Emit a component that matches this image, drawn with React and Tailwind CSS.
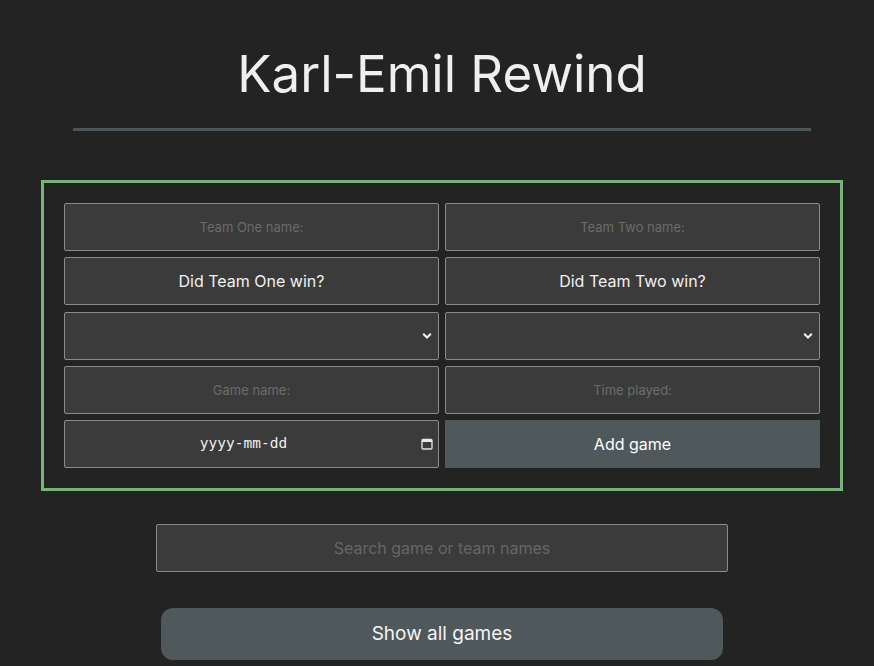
import React from "react";

function Chevron() {
  return (
    <svg width="10" height="7" viewBox="0 0 10 7" className="absolute right-[6px] top-1/2 -translate-y-1/2">
      <path d="M1.2 1.2 L5 5 L8.8 1.2" fill="none" stroke="#f2f2f2" strokeWidth="2" />
    </svg>
  );
}

function Calendar() {
  return (
    <svg width="12" height="12" viewBox="0 0 12 12" className="absolute right-[5px] top-1/2 -translate-y-1/2">
      <rect x="1" y="1.5" width="10" height="9.5" rx="1" fill="none" stroke="#e8e8e8" strokeWidth="1.3" />
      <rect x="1" y="1.5" width="10" height="2.5" fill="#e8e8e8" />
    </svg>
  );
}

const field =
  "h-[48px] w-full bg-[#3b3b3b] border border-[#8a8a8a] rounded-[2px] flex items-center justify-center relative";

export default function App() {
  return (
    <div
      className="min-h-[666px] bg-[#232323] pl-[10px] flex flex-col items-center"
      style={{ fontFamily: "Inter, 'Noto Sans', sans-serif" }}
    >
      <h1 className="mt-[38px] text-[51px] leading-[72px] text-[#efefef] font-normal">Karl-Emil Rewind</h1>
      <div className="mt-[18px] w-[738px] h-[3px] bg-[#4d5558]" />
      <div className="mt-[49px] w-[802px] border-[3px] border-[#78b47a] p-[20px] grid grid-cols-2 gap-x-[6px] gap-y-[6px]">
        <div className={field}>
          <span className="text-[13px] text-[#6b6b6b] pt-[2px]">Team One name:</span>
        </div>
        <div className={field}>
          <span className="text-[13px] text-[#6b6b6b] pt-[2px]">Team Two name:</span>
        </div>
        <div className={field}>
          <span className="text-[16px] text-[#f0f0f0]">Did Team One win?</span>
        </div>
        <div className={field}>
          <span className="text-[16px] text-[#f0f0f0]">Did Team Two win?</span>
        </div>
        <div className={field + " mt-[1px]"}>
          <Chevron />
        </div>
        <div className={field + " mt-[1px]"}>
          <Chevron />
        </div>
        <div className={field}>
          <span className="text-[13px] text-[#6b6b6b] pt-[2px]">Game name:</span>
        </div>
        <div className={field}>
          <span className="text-[13px] text-[#6b6b6b] pt-[2px]">Time played:</span>
        </div>
        <div className={field + " pr-[16px]"}>
          <span
            className="text-[14.5px] text-[#f0f0f0]"
            style={{ fontFamily: "'DejaVu Sans Mono', monospace" }}
          >
            yyyy-mm-dd
          </span>
          <Calendar />
        </div>
        <div className="h-[48px] w-full bg-[#4f585b] flex items-center justify-center">
          <span className="text-[16px] text-white">Add game</span>
        </div>
      </div>
      <div className="mt-[33px] w-[572px] h-[48px] bg-[#3b3b3b] border border-[#8a8a8a] rounded-[2px] flex items-center justify-center">
        <span className="text-[16px] text-[#666666]">Search game or team names</span>
      </div>
      <div className="mt-[36px] w-[562px] h-[52px] bg-[#4f585b] rounded-[12px] flex items-center justify-center">
        <span className="text-[19px] text-[#f4f4f4]">Show all games</span>
      </div>
    </div>
  );
}
